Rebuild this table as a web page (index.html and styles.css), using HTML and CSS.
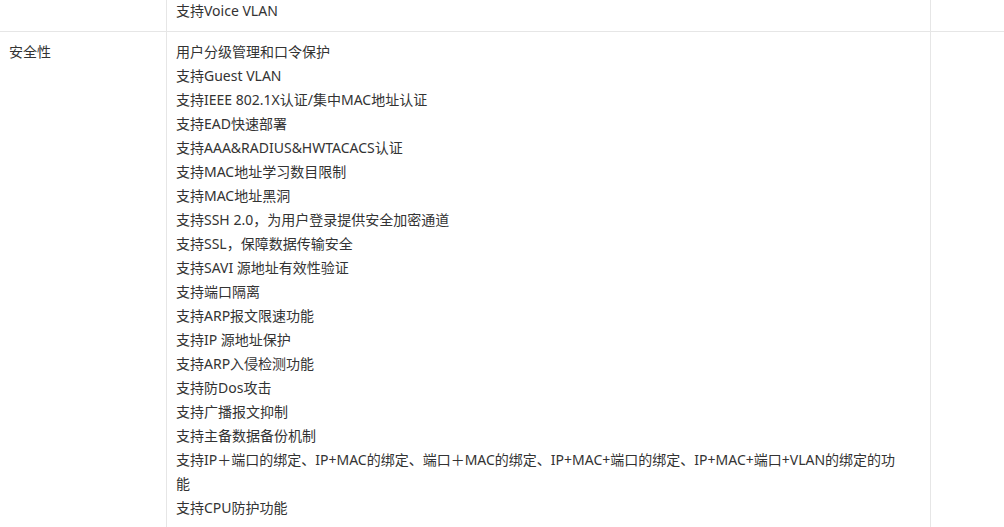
FILE: index.html
```html
<!DOCTYPE html>
<html lang="zh-CN">
<head>
    <meta charset="UTF-8">
    <meta name="viewport" content="width=device-width, initial-scale=1.0">
    <title>产品规格</title>
    <link rel="stylesheet" href="styles.css">
</head>
<body>
    <table class="spec-table">
        <colgroup>
            <col class="col-name">
            <col class="col-value">
            <col class="col-extra">
        </colgroup>
        <tr>
            <td></td>
            <td>支持Voice VLAN</td>
            <td></td>
        </tr>
        <tr>
            <td>安全性</td>
            <td>
                用户分级管理和口令保护<br>
                支持Guest VLAN<br>
                支持IEEE 802.1X认证/集中MAC地址认证<br>
                支持EAD快速部署<br>
                支持AAA&amp;RADIUS&amp;HWTACACS认证<br>
                支持MAC地址学习数目限制<br>
                支持MAC地址黑洞<br>
                支持SSH 2.0，为用户登录提供安全加密通道<br>
                支持SSL，保障数据传输安全<br>
                支持SAVI 源地址有效性验证<br>
                支持端口隔离<br>
                支持ARP报文限速功能<br>
                支持IP 源地址保护<br>
                支持ARP入侵检测功能<br>
                支持防Dos攻击<br>
                支持广播报文抑制<br>
                支持主备数据备份机制<br>
                支持IP＋端口的绑定、IP+MAC的绑定、端口＋MAC的绑定、IP+MAC+端口的绑定、IP+MAC+端口+VLAN的绑定的功<br>能<br>
                支持CPU防护功能
            </td>
            <td></td>
        </tr>
    </table>
</body>
</html>
```

FILE: styles.css
```css
body {
    margin: 0;
    font-family: "Noto Sans", "Noto Sans CJK SC", sans-serif;
    font-size: 14px;
    line-height: 24px;
    color: #333;
    background-color: #fff;
    overflow: hidden;
}

.spec-table {
    border-collapse: collapse;
    table-layout: fixed;
    width: 1100px;
    margin: -10px 0 0 -1px;
}

.col-name {
    width: 167px;
}

.col-value {
    width: 764px;
}

.spec-table td {
    border: 1px solid #e6e6e6;
    padding: 8px 9px;
    vertical-align: top;
}
```
